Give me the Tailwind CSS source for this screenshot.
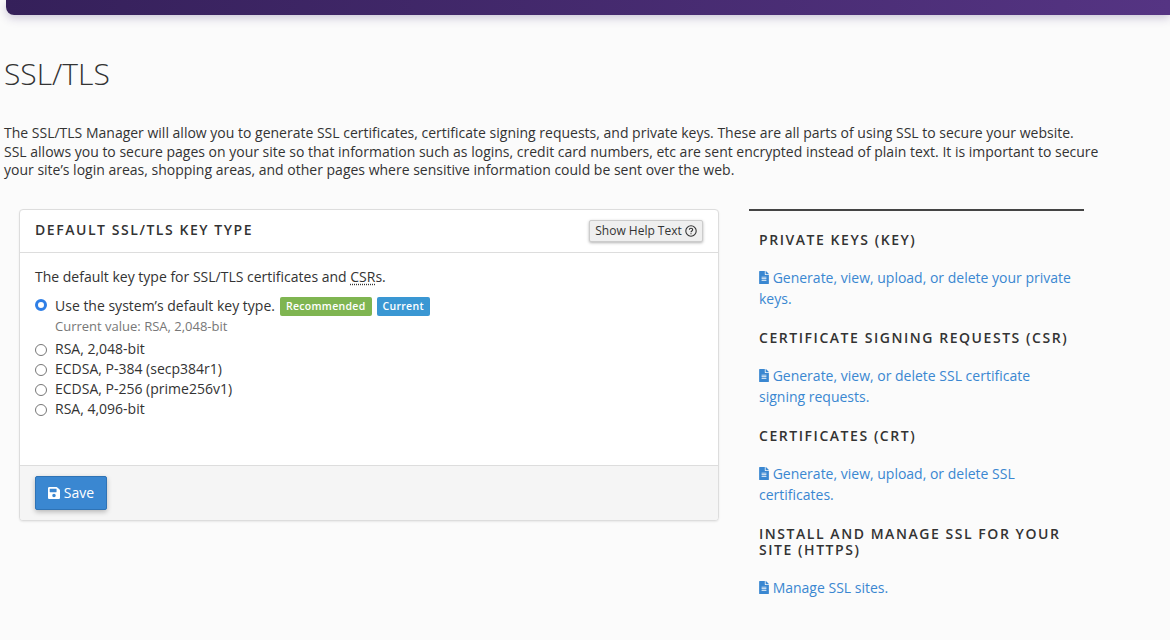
<!DOCTYPE html>
<html lang="en">
<head>
  <meta charset="UTF-8"/>
  <meta name="viewport" content="width=device-width, initial-scale=1.0"/>
  <title>SSL/TLS</title>
  <script src="https://cdn.jsdelivr.net/npm/@tailwindcss/browser@4"></script>
</head>
<body class="bg-[#fbfbfb] text-[#333] font-['Open_Sans',sans-serif] text-[14px] h-[640px] overflow-hidden">

  <!-- top bar -->
  <div class="h-[15px] ml-[6px] rounded-bl-[8px] bg-gradient-to-r from-[#35205a] to-[#553483] shadow-[0_3px_10px_rgba(60,40,110,0.25)]"></div>

  <main class="pl-[4px]">
    <h1 class="mt-[40px] text-[30px] leading-[38px] font-light text-[#333]">SSL/TLS</h1>
    <p class="mt-[31px] w-[1105px] leading-[18.5px] text-[14px]">The SSL/TLS Manager will allow you to generate SSL certificates, certificate signing requests, and private keys. These are all parts of using SSL to secure your website.<br/>SSL allows you to secure pages on your site so that information such as logins, credit card numbers, etc are sent encrypted instead of plain text. It is important to secure your site’s login areas, shopping areas, and other pages where sensitive information could be sent over the web.</p>

    <div class="mt-[29px] ml-[15px] flex items-start">
      <!-- key type panel -->
      <section class="w-[700px] h-[312px] flex flex-col bg-white border border-[#ddd] rounded-[4px] shadow-[0_1px_2px_rgba(0,0,0,0.08)] overflow-hidden">
        <div class="h-[43px] shrink-0 flex items-center justify-between pl-[15px] pr-[15px] border-b border-[#ddd]">
          <h2 class="mb-[2px] text-[14px] font-semibold tracking-[1.55px] text-[#333]">DEFAULT SSL/TLS KEY TYPE</h2>
          <button class="h-[22px] w-[114px] flex items-center justify-center gap-[3px] bg-[#efefef] border border-[#ccc] rounded-[2px] shadow-[0_1px_3px_rgba(0,0,0,0.3)] text-[12px] text-[#333]">
            Show Help Text
            <svg class="w-[12px] h-[12px]" viewBox="0 0 12 12" fill="none" stroke="#333" stroke-width="1.1">
              <circle cx="6" cy="6" r="5.2"/>
              <path d="M4.3 4.8c0-1 .8-1.6 1.7-1.6s1.7.6 1.7 1.5c0 1.2-1.7 1.3-1.7 2.5"/>
              <path d="M6 8.2v1.1"/>
            </svg>
          </button>
        </div>
        <div class="flex-1 pl-[15px] pt-[14px]">
          <p class="leading-[20px]">The default key type for SSL/TLS certificates and <span class="underline decoration-dotted underline-offset-2">CSR</span>s.</p>
          <div class="mt-[9px] flex items-center h-[20px]">
            <span class="mb-[2px] w-[12px] h-[12px] rounded-full border-[3.5px] border-[#2f7fe6] bg-white shrink-0"></span>
            <span class="ml-[8px] leading-[20px]">Use the system’s default key type.</span>
            <span class="ml-[5px] mt-[2px] h-[19px] px-[6px] flex items-center rounded-[2px] bg-[#7fb551] text-white text-[10.5px] font-semibold tracking-[0.3px]">Recommended</span>
            <span class="ml-[5px] mt-[2px] h-[19px] px-[6px] flex items-center rounded-[2px] bg-[#3a97d3] text-white text-[10.5px] font-semibold tracking-[0.3px]">Current</span>
          </div>
          <p class="ml-[20px] text-[13px] leading-[20px] text-[#777]">Current value: RSA, 2,048-bit</p>
          <div class="mt-[3px] flex items-center h-[20px]">
            <span class="mt-[2px] w-[12px] h-[12px] rounded-full border border-[#777] bg-white shrink-0"></span>
            <span class="ml-[8px]">RSA, 2,048-bit</span>
          </div>
          <div class="flex items-center h-[20px]">
            <span class="mt-[2px] w-[12px] h-[12px] rounded-full border border-[#777] bg-white shrink-0"></span>
            <span class="ml-[8px]">ECDSA, P-384 (secp384r1)</span>
          </div>
          <div class="flex items-center h-[20px]">
            <span class="mt-[2px] w-[12px] h-[12px] rounded-full border border-[#777] bg-white shrink-0"></span>
            <span class="ml-[8px]">ECDSA, P-256 (prime256v1)</span>
          </div>
          <div class="flex items-center h-[20px]">
            <span class="mt-[2px] w-[12px] h-[12px] rounded-full border border-[#777] bg-white shrink-0"></span>
            <span class="ml-[8px]">RSA, 4,096-bit</span>
          </div>
        </div>
        <div class="h-[55px] shrink-0 bg-[#f5f5f5] border-t border-[#ddd] pl-[15px] pt-[10px]">
          <button class="w-[72px] h-[34px] flex items-center justify-center gap-[4px] bg-[#3a87d1] border border-[#2f73b5] rounded-[2px] shadow-[0_2px_5px_rgba(0,0,0,0.25)] text-white text-[14px]">
            <svg class="w-[12px] h-[14px]" viewBox="0 0 448 512" fill="currentColor"><path d="M433.941 129.941l-83.882-83.882A48 48 0 0 0 316.118 32H48C21.49 32 0 53.49 0 80v352c0 26.51 21.49 48 48 48h352c26.51 0 48-21.49 48-48V163.882a48 48 0 0 0-14.059-33.941zM224 416c-35.346 0-64-28.654-64-64 0-35.346 28.654-64 64-64s64 28.654 64 64c0 35.346-28.654 64-64 64zm96-304.52V212c0 6.627-5.373 12-12 12H76c-6.627 0-12-5.373-12-12V108c0-6.627 5.373-12 12-12h228.52c3.183 0 6.235 1.264 8.485 3.515l3.48 3.48A11.996 11.996 0 0 1 320 111.48z"/></svg>
            Save
          </button>
        </div>
      </section>

      <!-- sidebar -->
      <aside class="ml-[30px] w-[335px] border-t-2 border-[#444] pl-[10px] pr-[10px] pt-[21px]">
        <h3 class="text-[14px] leading-[16px] font-semibold tracking-[1.55px] text-[#333]">PRIVATE KEYS (KEY)</h3>
        <a class="block mt-[19px] leading-[21px] text-[#3a87d1]">
          <svg class="inline-block w-[10px] h-[13px] align-[-1px]" viewBox="0 0 384 512" fill="currentColor"><path d="M224 136V0H24C10.7 0 0 10.7 0 24v464c0 13.3 10.7 24 24 24h336c13.3 0 24-10.7 24-24V160H248c-13.2 0-24-10.8-24-24zm64 236c0 6.6-5.4 12-12 12H108c-6.6 0-12-5.4-12-12v-8c0-6.6 5.4-12 12-12h168c6.6 0 12 5.4 12 12v8zm0-64c0 6.6-5.4 12-12 12H108c-6.6 0-12-5.4-12-12v-8c0-6.6 5.4-12 12-12h168c6.6 0 12 5.4 12 12v8zm0-72v8c0 6.6-5.4 12-12 12H108c-6.6 0-12-5.4-12-12v-8c0-6.6 5.4-12 12-12h168c6.6 0 12 5.4 12 12zm96-114.1v6.1H256V0h6.1c6.4 0 12.5 2.5 17 7l97.9 98c4.5 4.5 7 10.6 7 16.9z"/></svg>
          Generate, view, upload, or delete your private keys.
        </a>
        <h3 class="mt-[21px] text-[14px] leading-[16px] font-semibold tracking-[1.55px] text-[#333]">CERTIFICATE SIGNING REQUESTS (CSR)</h3>
        <a class="block mt-[19px] leading-[21px] text-[#3a87d1]">
          <svg class="inline-block w-[10px] h-[13px] align-[-1px]" viewBox="0 0 384 512" fill="currentColor"><path d="M224 136V0H24C10.7 0 0 10.7 0 24v464c0 13.3 10.7 24 24 24h336c13.3 0 24-10.7 24-24V160H248c-13.2 0-24-10.8-24-24zm64 236c0 6.6-5.4 12-12 12H108c-6.6 0-12-5.4-12-12v-8c0-6.6 5.4-12 12-12h168c6.6 0 12 5.4 12 12v8zm0-64c0 6.6-5.4 12-12 12H108c-6.6 0-12-5.4-12-12v-8c0-6.6 5.4-12 12-12h168c6.6 0 12 5.4 12 12v8zm0-72v8c0 6.6-5.4 12-12 12H108c-6.6 0-12-5.4-12-12v-8c0-6.6 5.4-12 12-12h168c6.6 0 12 5.4 12 12zm96-114.1v6.1H256V0h6.1c6.4 0 12.5 2.5 17 7l97.9 98c4.5 4.5 7 10.6 7 16.9z"/></svg>
          Generate, view, or delete SSL certificate signing requests.
        </a>
        <h3 class="mt-[21px] text-[14px] leading-[16px] font-semibold tracking-[1.55px] text-[#333]">CERTIFICATES (CRT)</h3>
        <a class="block mt-[19px] leading-[21px] text-[#3a87d1]">
          <svg class="inline-block w-[10px] h-[13px] align-[-1px]" viewBox="0 0 384 512" fill="currentColor"><path d="M224 136V0H24C10.7 0 0 10.7 0 24v464c0 13.3 10.7 24 24 24h336c13.3 0 24-10.7 24-24V160H248c-13.2 0-24-10.8-24-24zm64 236c0 6.6-5.4 12-12 12H108c-6.6 0-12-5.4-12-12v-8c0-6.6 5.4-12 12-12h168c6.6 0 12 5.4 12 12v8zm0-64c0 6.6-5.4 12-12 12H108c-6.6 0-12-5.4-12-12v-8c0-6.6 5.4-12 12-12h168c6.6 0 12 5.4 12 12v8zm0-72v8c0 6.6-5.4 12-12 12H108c-6.6 0-12-5.4-12-12v-8c0-6.6 5.4-12 12-12h168c6.6 0 12 5.4 12 12zm96-114.1v6.1H256V0h6.1c6.4 0 12.5 2.5 17 7l97.9 98c4.5 4.5 7 10.6 7 16.9z"/></svg>
          Generate, view, upload, or delete SSL certificates.
        </a>
        <h3 class="mt-[21px] text-[14px] leading-[16px] font-semibold tracking-[1.55px] text-[#333]">INSTALL AND MANAGE SSL FOR YOUR SITE (HTTPS)</h3>
        <a class="block mt-[19px] leading-[21px] text-[#3a87d1]">
          <svg class="inline-block w-[10px] h-[13px] align-[-1px]" viewBox="0 0 384 512" fill="currentColor"><path d="M224 136V0H24C10.7 0 0 10.7 0 24v464c0 13.3 10.7 24 24 24h336c13.3 0 24-10.7 24-24V160H248c-13.2 0-24-10.8-24-24zm64 236c0 6.6-5.4 12-12 12H108c-6.6 0-12-5.4-12-12v-8c0-6.6 5.4-12 12-12h168c6.6 0 12 5.4 12 12v8zm0-64c0 6.6-5.4 12-12 12H108c-6.6 0-12-5.4-12-12v-8c0-6.6 5.4-12 12-12h168c6.6 0 12 5.4 12 12v8zm0-72v8c0 6.6-5.4 12-12 12H108c-6.6 0-12-5.4-12-12v-8c0-6.6 5.4-12 12-12h168c6.6 0 12 5.4 12 12zm96-114.1v6.1H256V0h6.1c6.4 0 12.5 2.5 17 7l97.9 98c4.5 4.5 7 10.6 7 16.9z"/></svg>
          Manage SSL sites.
        </a>
      </aside>
    </div>
  </main>
</body>
</html>
